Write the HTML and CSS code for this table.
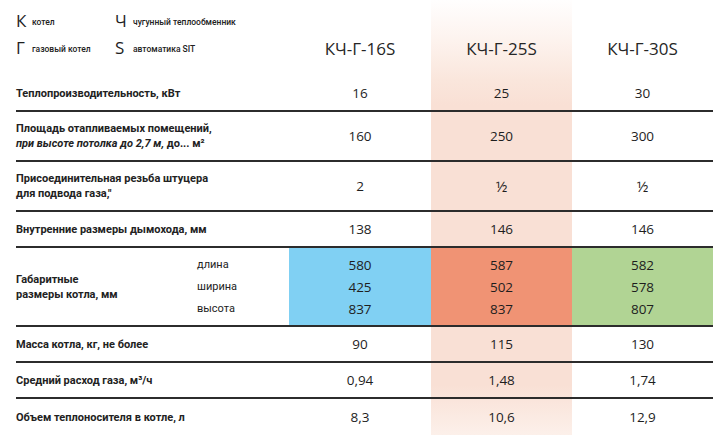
FILE: index.html
```html
<!DOCTYPE html>
<html lang="ru">
<head>
<meta charset="utf-8">
<title>КЧ-Г</title>
<link rel="stylesheet" href="styles.css">
</head>
<body>
<div class="page">
  <div class="row head">
    <div class="legend">
      <div class="lg-item"><span class="lg-big">К</span><span class="lg-txt">котел</span></div>
      <div class="lg-item"><span class="lg-big wide">Ч</span><span class="lg-txt">чугунный теплообменник</span></div>
      <div class="lg-item"><span class="lg-big">Г</span><span class="lg-txt">газовый котел</span></div>
      <div class="lg-item"><span class="lg-big wide">S</span><span class="lg-txt">автоматика SIT</span></div>
    </div>
    <div class="model">КЧ-Г-16S</div>
    <div class="model">КЧ-Г-25S</div>
    <div class="model">КЧ-Г-30S</div>
  </div>

  <div class="row r1">
    <div class="label">Теплопроизводительность, кВт</div>
    <div class="val">16</div><div class="val">25</div><div class="val">30</div>
  </div>

  <div class="row r2">
    <div class="label">Площадь отапливаемых помещений,<br><i>при высоте потолка до 2,7 м,</i> до... м²</div>
    <div class="val">160</div><div class="val">250</div><div class="val">300</div>
  </div>

  <div class="row r2">
    <div class="label">Присоединительная резьба штуцера<br>для подвода газа,"</div>
    <div class="val">2</div><div class="val frac">½</div><div class="val frac">½</div>
  </div>

  <div class="row r1">
    <div class="label">Внутренние размеры дымохода, мм</div>
    <div class="val">138</div><div class="val">146</div><div class="val">146</div>
  </div>

  <div class="row r5">
    <div class="label split">
      <div class="main">Габаритные<br>размеры котла, мм</div>
      <div class="subs"><span>длина</span><span>ширина</span><span>высота</span></div>
    </div>
    <div class="vals blue"><span>580</span><span>425</span><span>837</span></div>
    <div class="vals orange"><span>587</span><span>502</span><span>837</span></div>
    <div class="vals green"><span>582</span><span>578</span><span>807</span></div>
  </div>

  <div class="row r1">
    <div class="label">Масса котла, кг, не более</div>
    <div class="val">90</div><div class="val">115</div><div class="val">130</div>
  </div>

  <div class="row r1">
    <div class="label">Средний расход газа, м³/ч</div>
    <div class="val">0,94</div><div class="val">1,48</div><div class="val">1,74</div>
  </div>

  <div class="row r1 last">
    <div class="label">Объем теплоносителя в котле, л</div>
    <div class="val">8,3</div><div class="val">10,6</div><div class="val">12,9</div>
  </div>
</div>
</body>
</html>
```

FILE: styles.css
```css
html, body {
  margin: 0;
  padding: 0;
  background: #ffffff;
}

.page {
  width: 719px;
  height: 435px;
  box-sizing: border-box;
  padding: 0 6px 0 16px;
  color: #222222;
  font-family: Roboto, "Noto Sans", sans-serif;
  background-image: linear-gradient(to bottom, #fffefe 0px, #fdf3ee 40px, #fae6dc 80px, #f9e0d5 105px, #f9e0d5 385px, #fcf0ea 435px);
  background-size: 141px 435px;
  background-position: 431px 0;
  background-repeat: no-repeat;
  overflow: hidden;
}

.row {
  display: grid;
  grid-template-columns: 273px 142px 141px 141px;
  border-bottom: 2px solid #2c2c2c;
  box-sizing: border-box;
  align-items: center;
}

.row.head {
  height: 76px;
  border-bottom: none;
  align-items: start;
}

.row.r1 { height: 36px; }
.row.r2 { height: 50px; }
.row.r5 { height: 79px; align-items: stretch; }
.row.last { border-bottom: none; }

.legend {
  display: grid;
  grid-template-columns: 99px auto;
  padding-top: 7px;
}

.lg-item {
  display: flex;
  align-items: center;
  height: 27px;
}

.lg-big {
  width: 16px;
  font-family: "Open Sans", sans-serif;
  font-weight: 400;
  font-size: 17px;
  color: #1e1e1e;
}

.lg-big.wide { width: 18px; }

.lg-txt {
  font-family: Roboto, sans-serif;
  font-weight: 500;
  font-size: 8.5px;
  color: #222;
  padding-top: 2px;
}

.model {
  margin-top: 38px;
  line-height: 22px;
  text-align: center;
  font-family: "Open Sans", sans-serif;
  font-weight: 400;
  font-size: 17px;
  color: #262626;
}

.label {
  font-family: Roboto, sans-serif;
  font-weight: 700;
  font-size: 11px;
  line-height: 15px;
  color: #222;
}

.label i {
  font-style: italic;
}

.val {
  text-align: center;
  font-family: "Open Sans", sans-serif;
  font-size: 13.5px;
  color: #1e1e1e;
}

.val.frac {
  font-size: 15px;
}

.label.split {
  display: flex;
  align-items: center;
}

.split .main {
  width: 181px;
}

.subs {
  display: flex;
  flex-direction: column;
  font-weight: 400;
  font-size: 11px;
  line-height: 22px;
}

.vals {
  display: flex;
  flex-direction: column;
  justify-content: center;
  align-items: center;
  font-family: "Open Sans", sans-serif;
  font-size: 13.5px;
  line-height: 22px;
  color: #1e1e1e;
}

.blue { background: #80d0f3; }
.orange { background: #f09374; }
.green { background: #b1d494; }
```
